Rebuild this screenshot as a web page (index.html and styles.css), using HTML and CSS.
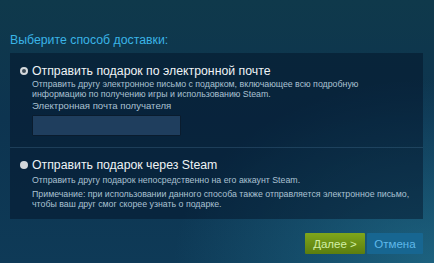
FILE: index.html
```html
<!DOCTYPE html>
<html lang="ru">
<head>
    <meta charset="UTF-8">
    <title>Способ доставки</title>
    <link rel="stylesheet" href="styles.css">
</head>
<body>
    <div class="page">
        <h2 class="heading">Выберите способ доставки:</h2>

        <div class="panel">
            <div class="option">
                <div class="option-title">
                    <span class="radio checked"></span>
                    Отправить подарок по электронной почте
                </div>
                <div class="option-body">
                    <p class="desc intro">Отправить другу электронное письмо с подарком, включающее всю подробную информацию по получению игры и использованию Steam.</p>
                    <label class="field-label" for="email">Электронная почта получателя</label>
                    <input class="field" type="text" id="email">
                </div>
            </div>

            <div class="option">
                <div class="option-title">
                    <span class="radio"></span>
                    Отправить подарок через Steam
                </div>
                <div class="option-body spaced">
                    <p class="desc">Отправить другу подарок непосредственно на его аккаунт Steam.</p>
                    <p class="desc note">Примечание: при использовании данного способа также отправляется электронное письмо, чтобы ваш друг смог скорее узнать о подарке.</p>
                </div>
            </div>
        </div>

        <div class="actions">
            <button class="btn btn-next">Далее &gt;</button>
            <button class="btn btn-cancel">Отмена</button>
        </div>
    </div>
</body>
</html>
```

FILE: styles.css
```css
html, body {
    height: 100%;
}
body {
    margin: 0;
    font-family: "Liberation Sans", Arial, sans-serif;
    background:
        radial-gradient(ellipse 60% 70% at 100% 100%, rgba(40, 130, 160, 0.55), rgba(40, 130, 160, 0) 100%),
        linear-gradient(to bottom, #0f394b 0%, #0d3450 45%, #0e3a57 100%);
    overflow: hidden;
}
.page {
    padding: 32px 11px 0 10px;
}
.heading {
    margin: 0;
    font-size: 12.3px;
    font-weight: normal;
    line-height: 17px;
    color: #3ab4e6;
}
.panel {
    margin-top: 4px;
    background: rgba(2, 16, 36, 0.45);
}
.option {
    padding: 10px 12px 11px 10px;
}
.option + .option {
    border-top: 1px solid rgba(90, 140, 175, 0.25);
    padding-top: 9px;
    padding-bottom: 10px;
}
.option-title {
    display: flex;
    align-items: center;
    gap: 4px;
    font-size: 12.3px;
    line-height: 16px;
    color: #eef3f6;
}
.radio {
    width: 8px;
    height: 8px;
    border-radius: 50%;
    background: #d4d8dc;
    box-sizing: border-box;
}
.radio.checked {
    border: 2px solid #d4d8dc;
    background: #3b4a56;
}
.option-body {
    padding-left: 12px;
}
.option-body.spaced {
    padding-top: 2px;
}
.desc {
    margin: 0;
    font-size: 8.8px;
    line-height: 10px;
    color: #aac1d2;
}
.desc.intro {
    max-width: 360px;
}
.desc.note {
    margin-top: 4px;
}
.field-label {
    display: block;
    margin-top: 1px;
    font-size: 9.6px;
    line-height: 12px;
    color: #aac1d2;
}
.field {
    display: block;
    width: 149px;
    height: 21px;
    margin-top: 3px;
    box-sizing: border-box;
    background: #1f3e5e;
    border: 1px solid #0a1c2e;
    border-radius: 1px;
}
.actions {
    display: flex;
    justify-content: flex-end;
    gap: 2px;
    margin-top: 14px;
}
.btn {
    height: 21px;
    border: none;
    border-radius: 1px;
    font-family: "Liberation Sans", Arial, sans-serif;
    font-size: 11.5px;
    padding: 0;
    cursor: pointer;
}
.btn-next {
    width: 60px;
    background: linear-gradient(to bottom, #7fa61b, #5b7d0f);
    color: #d3efa5;
}
.btn-cancel {
    width: 56px;
    background: #176691;
    color: #5fb9ea;
}
```
